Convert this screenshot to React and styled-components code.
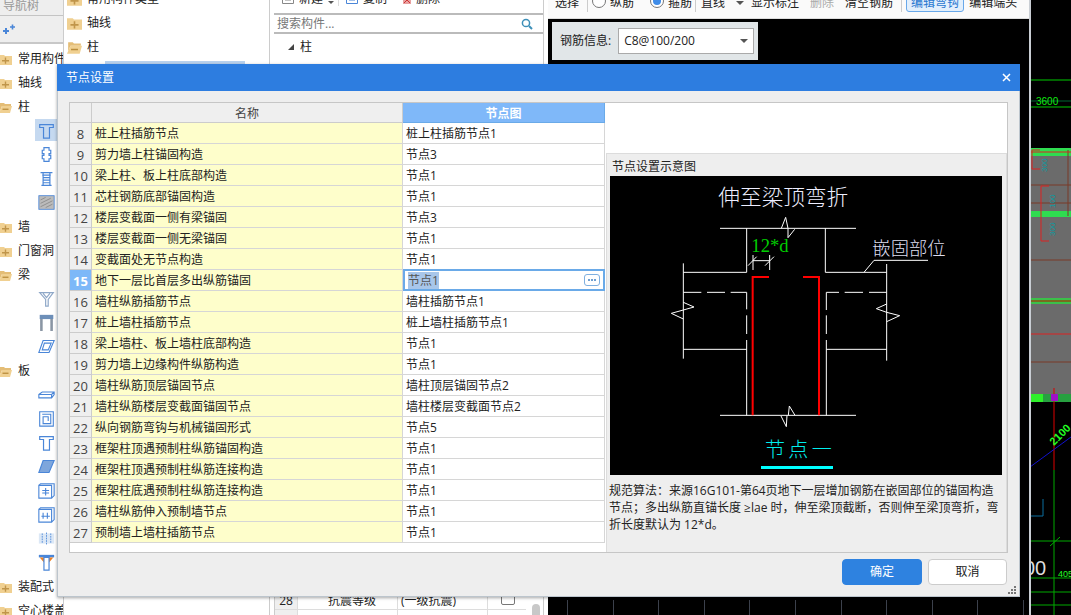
import styled, { createGlobalStyle } from 'styled-components';

const GlobalStyle = createGlobalStyle`
  html, body {
    margin: 0;
    padding: 0;
    overflow: hidden;
    background: #fff;
  }
  * {
    box-sizing: border-box;
  }
`;

const Page = styled.div`
  position: relative;
  width: 1071px;
  height: 615px;
  display: flex;
  overflow: hidden;
  background: #fff;
  color: #222;
  font: 12px/24px "Open Sans", "Noto Sans CJK SC", sans-serif;
`;

/* left navigation */
const NavColumn = styled.div`
  width: 64px;
  flex: none;
  overflow: hidden;
  white-space: nowrap;
  border-right: 1px solid #ccc;
`;

const NavTitle = styled.div`
  height: 16px;
  background: #eee;
  border-bottom: 1px solid #c4c4c4;
  color: #999;
  padding-left: 3px;
  line-height: 12px;
`;

const NavTools = styled.div`
  height: 28px;
  background: #eee;
  border-bottom: 2px solid #c8c8c8;
  padding: 8px 0 0 2px;
  margin-bottom: 3px;
  display: flex;
`;

const NavRow = styled.div`
  height: 24px;
  display: flex;
  align-items: center;
  gap: 6px;
`;

const FolderBox = styled.svg`
  width: ${(p) => p.$size}px;
  height: ${(p) => p.$size}px;
  margin-left: ${(p) => (p.$size > 13 ? 0 : -1)}px;
  flex: none;
`;

const IconRow = styled.div`
  height: 24px;
  padding: 0 0 2px 35px;
`;

const IconCell = styled.div`
  width: 22px;
  height: 22px;
  display: flex;
  align-items: center;
  justify-content: center;
  background: ${(p) => (p.$active ? '#c5d9f0' : 'transparent')};
`;

/* tree next to navigation */
const TreeColumn = styled.div`
  width: 206px;
  flex: none;
  overflow: hidden;
  border-right: 1px solid #ccc;
`;

const TreeInner = styled.div`
  margin-top: -13px;
`;

const TreeRow = styled.div`
  height: 24px;
  display: flex;
  align-items: center;
  gap: 5px;
  padding-left: 3px;
`;

const TreeSelected = styled.div`
  height: 20px;
  margin: 2px 24px 0 41px;
  background: #b9d2ee;
`;

/* component list */
const ListColumn = styled.div`
  position: relative;
  width: 270px;
  flex: none;
  margin-left: 4px;
  display: flex;
  flex-direction: column;
  border-right: 1px solid #ccc;
  overflow: hidden;
`;

const ListTools = styled.div`
  height: 15px;
  flex: none;
  border-bottom: 2px solid #bbb;
  overflow: hidden;
  display: flex;
  align-items: flex-end;
  padding: 0 0 7px 8px;
  line-height: 14px;
`;

const ToolText = styled.span`
  display: flex;
  align-items: center;
  gap: 5px;
  margin-right: ${(p) => p.$gap || 0}px;
`;

const ToolCaret = styled.span`
  width: 0;
  height: 0;
  margin: 0 4px 2px 5px;
  border: 3px solid transparent;
  border-top: 3px solid #555;
  border-bottom: none;
`;

const ToolDivider = styled.span`
  width: 1px;
  height: 12px;
  margin-right: 7px;
  background: #ddd;
`;

const SearchBox = styled.div`
  height: 19px;
  flex: none;
  border-bottom: 2px solid #bbb;
  padding: 0 10px 0 3px;
  display: flex;
  justify-content: space-between;
  align-items: center;
  color: #777;
  line-height: 17px;
`;

const ListTree = styled.div`
  height: 24px;
  margin-top: 1px;
  display: flex;
  align-items: center;
  gap: 6px;
  padding-left: 14px;
`;

const Triangle = styled.span`
  width: 0;
  height: 0;
  border-left: 6px solid transparent;
  border-bottom: 6px solid #444;
`;

const AttrTable = styled.div`
  margin-top: auto;
  display: grid;
  grid-template-columns: 23px 100px 90px 40px;
  grid-auto-rows: 22px;
  height: 27px;
  overflow: hidden;
  border-left: 1px solid #ccc;
  margin-right: 17px;
`;

const AttrCell = styled.div`
  border-right: 1px solid #ddd;
  border-bottom: 1px solid #ddd;
  padding: 4px 0 0 ${(p) => p.$pad || 0}px;
  background: ${(p) => (p.$head ? '#efefef' : '#fff')};
  display: flex;
  align-items: center;
  justify-content: ${(p) => (p.$center ? 'center' : 'flex-start')};
`;

const CheckBox = styled.span`
  width: 14px;
  height: 14px;
  border: 1px solid #777;
  border-radius: 2px;
  margin-top: -6px;
`;

const ScrollThumb = styled.div`
  position: absolute;
  right: 3px;
  bottom: -6px;
  width: 8px;
  height: 17px;
  border-radius: 4px;
  background: #c8c8c8;
`;

/* steel editor */
const EditorColumn = styled.div`
  width: 481px;
  flex: none;
  margin-left: 4px;
  display: flex;
  flex-direction: column;
`;

const EditorBar = styled.div`
  height: 19px;
  flex: none;
  background: #fafafa;
  border-bottom: 1px solid #ddd;
  overflow: hidden;
`;

const EditorBarRow = styled.div`
  margin-top: -9px;
  height: 21px;
  display: flex;
  align-items: flex-start;
  padding-left: 7px;
  line-height: 24px;
  white-space: nowrap;
`;

const BarButton = styled.span`
  height: 21px;
  padding: 0 ${(p) => p.$pad ?? 0}px;
  margin-right: ${(p) => p.$gap || 0}px;
  color: ${(p) => (p.$disabled ? '#aaa' : p.$on ? '#2a78d0' : '#222')};
  background: ${(p) => (p.$on ? '#e2effc' : 'transparent')};
  border: ${(p) => (p.$on ? '1px solid #68a8ea' : 'none')};
  border-radius: 3px;
  line-height: ${(p) => (p.$on ? '22px' : '24px')};
`;

const BarDivider = styled.span`
  width: 1px;
  height: 21px;
  background: #ccc;
  margin-right: ${(p) => p.$gap}px;
`;

const Radio = styled.span`
  width: 14px;
  height: 14px;
  margin: 3px 4px 0 0;
  border: 1px solid #777;
  border-radius: 50%;
  background: #fff;
  display: flex;
  align-items: center;
  justify-content: center;
  flex: none;
  &::after {
    content: '';
    width: 8px;
    height: 8px;
    border-radius: 50%;
    background: ${(p) => (p.$on ? '#3f8ce8' : 'transparent')};
  }
`;

const Caret = styled.span`
  width: 0;
  height: 0;
  border: 4px solid transparent;
  border-top: 4px solid #555;
  border-bottom: none;
  margin: 10px 7px 0 ${(p) => p.$left}px;
`;

const Canvas = styled.div`
  flex: 1;
  background: #000;
  display: flex;
  flex-direction: column;
  padding: 3px 0 0 4px;
`;

const SteelPanel = styled.div`
  width: 206px;
  height: 38px;
  background: #e1e6e8;
  display: flex;
  align-items: center;
  padding-left: 8px;
  gap: 7px;
`;

const SteelSelect = styled.div`
  width: 136px;
  height: 26px;
  background: #fff;
  border: 1px solid #aaa;
  display: flex;
  align-items: center;
  justify-content: space-between;
  padding: 0 5px;
  &::after {
    content: '';
    border: 4px solid transparent;
    border-top: 4px solid #555;
    border-bottom: none;
  }
`;

const RulerTicks = styled.div`
  margin: auto 0 0 15px;
  height: 15px;
  background: repeating-linear-gradient(90deg, #3c414c 0 1px, transparent 1px 45.6px);
`;

const CadStrip = styled.svg`
  width: 42px;
  height: 615px;
  flex: none;
  display: block;
  background: #000;
  border-left: 2px solid #c9ced4;
`;

/* dialog on top */
const Dialog = styled.div`
  position: absolute;
  left: 57px;
  top: 64px;
  width: 963px;
  height: 533px;
  display: flex;
  flex-direction: column;
  box-shadow: 0 1px 3px rgba(0, 0, 0, 0.35);
`;

const DialogTitle = styled.div`
  height: 27px;
  flex: none;
  background: #2d7de0;
  color: #fff;
  display: flex;
  align-items: center;
  justify-content: space-between;
  padding: 0 9px;
`;

const DialogBody = styled.div`
  flex: 1;
  background: #eee;
  border: 1px solid #bcc5cd;
  border-top: none;
  padding: 11px 12px 0 11px;
  display: flex;
  flex-direction: column;
`;

const ContentPanel = styled.div`
  width: 939px;
  height: 451px;
  background: #fff;
  border: 1px solid #c6c6c6;
  display: flex;
`;

const NodeGrid = styled.div`
  width: 535px;
  flex: none;
  display: grid;
  grid-template-columns: 22px 311px 202px;
  grid-template-rows: 20px;
  grid-auto-rows: 21px;
  align-content: start;
  line-height: 22px;
`;

const HeadCell = styled.div`
  background: ${(p) => (p.$on ? '#7fb8f9' : '#efefef')};
  color: ${(p) => (p.$on ? '#fff' : '#444')};
  font-weight: ${(p) => (p.$on ? 700 : 400)};
  border-right: 1px solid ${(p) => (p.$on ? '#6aaae8' : '#ccc')};
  border-bottom: 1px solid ${(p) => (p.$on ? '#6aaae8' : '#ccc')};
  text-align: center;
`;

const NumCell = styled.div`
  background: ${(p) => (p.$on ? '#7db8f8' : '#efefef')};
  color: ${(p) => (p.$on ? '#fff' : '#444')};
  font-weight: ${(p) => (p.$on ? 700 : 400)};
  font-size: 13px;
  border-right: 1px solid #ccc;
  border-bottom: 1px solid #ccc;
  text-align: center;
`;

const NameCell = styled.div`
  background: #fefecb;
  border-right: 1px solid #d6d6d6;
  border-bottom: 1px solid #d6d6d6;
  padding-left: 3px;
  white-space: nowrap;
`;

const ValueCell = styled.div`
  border-right: 1px solid #d6d6d6;
  border-bottom: 1px solid #d6d6d6;
  padding-left: 3px;
  white-space: nowrap;
`;

const EditingCell = styled.div`
  border: 2px solid #6aaae8;
  margin: -1px 0 0 0;
  height: 22px;
  display: flex;
  align-items: center;
  justify-content: space-between;
  padding: 0 3px;
  background: #fff;
`;

const SelectedText = styled.span`
  background: #a8c6ea;
  color: #555;
  line-height: 17px;
`;

const MoreButton = styled.span`
  width: 16px;
  height: 12px;
  border: 1px solid #7fb0e0;
  border-radius: 3px;
  display: flex;
  align-items: center;
  justify-content: center;
  gap: 1px;
  i {
    width: 2px;
    height: 2px;
    background: #6f9fd0;
  }
`;

const SideColumn = styled.div`
  flex: 1;
  margin-left: 1px;
  padding-top: 50px;
  display: flex;
  flex-direction: column;
`;

const PreviewBox = styled.div`
  flex: 1;
  background: #eee;
  border: 1px solid #dcdcdc;
  border-bottom: none;
`;

const PreviewTitle = styled.div`
  height: 22px;
  padding: 2px 0 0 5px;
  line-height: 22px;
`;

const Drawing = styled.svg`
  display: block;
  width: 392px;
  height: 299px;
  margin-left: 3px;
  background: #000;
`;

const PreviewNote = styled.p`
  margin: 7px 0 0 2px;
  width: 394px;
  line-height: 17px;
  color: #222;
`;

const DialogFooter = styled.div`
  display: flex;
  justify-content: flex-end;
  gap: 6px;
  padding-top: 6px;
`;

const FooterButton = styled.button`
  width: ${(p) => (p.$primary ? 80 : 79)}px;
  height: 26px;
  border-radius: 4px;
  border: 1px solid ${(p) => (p.$primary ? '#2e82e0' : '#ccc')};
  background: ${(p) => (p.$primary ? '#2e82e0' : '#fff')};
  color: ${(p) => (p.$primary ? '#fff' : '#222')};
  font: inherit;
  padding: 0;
`;

const Grip = styled.svg`
  position: absolute;
  right: 3px;
  bottom: 2px;
  width: 9px;
  height: 9px;
`;

const Folder = ({ open, size = 13 }) => (
  <FolderBox $size={size} viewBox="0 0 13 13">
    {open ? (
      <>
        <path d="M1 2h4l1 1h6v2H3L1 10z" fill="#e4bd76" />
        <path d="M3 5h10l-2 7H0z" fill="#f0d091" />
        <path d="M3.5 7.6h6v1.3h-6z" fill="#b98d3c" />
      </>
    ) : (
      <>
        <path d="M0 2h5l1 1h7v9H0z" fill="#f0d091" />
        <path d="M3 7h7v1.4H3zM5.8 4.6h1.4v6.2H5.8z" fill="#c0954a" />
      </>
    )}
  </FolderBox>
);

const blue = '#4a86d8';

const shapes = {
  tee: <path d="M2 3h16v3.5h-4.5V19h-7V6.5H2z" fill="none" stroke={blue} strokeWidth="1.4" />,
  cross: <path d="M7 2h6v3h2v4h-2v2h2v4h-2v3H7v-3H5v-4h2V9H5V5h2z" fill="none" stroke={blue} strokeWidth="1.4" />,
  ribbed: <path d="M3 3h14M5 6h10M6 3v15h8V3M6 9h8M6 12h8M6 15h8M4 18h12" fill="none" stroke={blue} strokeWidth="1.4" />,
  hatch: <g><rect x="1" y="2" width="18" height="16" fill="#bbb" stroke={blue} /><path d="M3 7l6-3M3 11l12-6M3 15l14-7M9 16l8-4" stroke="#888" /></g>,
  funnel: <path d="M2 3h16l-6 8v8H9v-8zM6 4l4 5 4-5" fill="none" stroke="#8fa8c8" strokeWidth="1.4" />,
  gate: <g><rect x="2" y="1" width="16" height="5" fill="#6d8fb8" /><path d="M4 6v14M16 6v14" stroke="#8a96a4" strokeWidth="3" fill="none" /></g>,
  para: <path d="M6 3h13l-6 14H1zM7.5 6h8l-3.5 8H5z" fill="none" stroke={blue} strokeWidth="1.3" />,
  plate: <path d="M1 10l4-3h14v3l-3 4H1zM1 10h15v4M16 10l3-3" fill="none" stroke={blue} strokeWidth="1.3" />,
  spiral: <path d="M2 2h16v17H2zM5 5h10v11H6v-8h6v5" fill="none" stroke={blue} strokeWidth="1.3" />,
  paraFill: <path d="M6 3h13l-6 14H1z" fill="#7ea6dc" stroke={blue} strokeWidth="1.3" />,
  boxCross: <g fill="none" stroke={blue} strokeWidth="1.3"><path d="M1 4h15v15H1zM1 4l2-2h16v14l-3 3" /><path d="M9 7v9M5 10h8M5 13h8" /></g>,
  boxGrid: <g fill="none" stroke={blue} strokeWidth="1.3"><path d="M1 4h15v15H1zM1 4l2-2h16v14l-3 3" /><path d="M6 8v7M11 8v7M4 12h10" /></g>,
  pair: <g><rect x="1" y="4" width="18" height="12" fill="#dce8f6" /><path d="M10 3v14M5 4v12M15 4v12" stroke={blue} strokeDasharray="2 1" /></g>,
  teeCap: <g><path d="M1 1h18v3H1z" fill={blue} /><path d="M2 4h5v6zM18 4h-5v6z" fill="#f08020" /><path d="M7 4h6v15H7z" fill="none" stroke={blue} strokeWidth="1.4" /></g>,
};

const NavIcon = ({ name, active }) => (
  <IconRow>
    <IconCell $active={active}>
      <svg width="17" height="17" viewBox="0 0 20 20">{shapes[name]}</svg>
    </IconCell>
  </IconRow>
);

const navItems = [
  ['f', '常用构件类型'],
  ['f', '轴线'],
  ['o', '柱'],
  ['i', 'tee', true],
  ['i', 'cross'],
  ['i', 'ribbed'],
  ['i', 'hatch'],
  ['f', '墙'],
  ['f', '门窗洞'],
  ['o', '梁'],
  ['i', 'funnel'],
  ['i', 'gate'],
  ['i', 'para'],
  ['o', '板'],
  ['i', 'plate'],
  ['i', 'spiral'],
  ['i', 'tee'],
  ['i', 'paraFill'],
  ['i', 'boxCross'],
  ['i', 'boxGrid'],
  ['i', 'pair'],
  ['i', 'teeCap'],
  ['f', '装配式'],
  ['f', '空心楼盖'],
];

const nodeRows = [
  [8, '桩上柱插筋节点', '桩上柱插筋节点1'],
  [9, '剪力墙上柱锚固构造', '节点3'],
  [10, '梁上柱、板上柱底部构造', '节点1'],
  [11, '芯柱钢筋底部锚固构造', '节点1'],
  [12, '楼层变截面一侧有梁锚固', '节点3'],
  [13, '楼层变截面一侧无梁锚固', '节点1'],
  [14, '变截面处无节点构造', '节点1'],
  [15, '地下一层比首层多出纵筋锚固', '节点1'],
  [16, '墙柱纵筋插筋节点', '墙柱插筋节点1'],
  [17, '桩上墙柱插筋节点', '桩上墙柱插筋节点1'],
  [18, '梁上墙柱、板上墙柱底部构造', '节点1'],
  [19, '剪力墙上边缘构件纵筋构造', '节点1'],
  [20, '墙柱纵筋顶层锚固节点', '墙柱顶层锚固节点2'],
  [21, '墙柱纵筋楼层变截面锚固节点', '墙柱楼层变截面节点2'],
  [22, '纵向钢筋弯钩与机械锚固形式', '节点5'],
  [23, '框架柱顶遇预制柱纵筋锚固构造', '节点1'],
  [24, '框架柱顶遇预制柱纵筋连接构造', '节点1'],
  [25, '框架柱底遇预制柱纵筋连接构造', '节点1'],
  [26, '墙柱纵筋伸入预制墙节点', '节点1'],
  [27, '预制墙上墙柱插筋节点', '节点1'],
];

const whiteLines = [
  'M348 175H756', 'M428 175V307', 'M664 175V307', 'M238 307H428', 'M664 307H848',
  'M238 280V566', 'M848 282V572', 'M238 367H292', 'M309 367H363', 'M380 367H428',
  'M667 367H705', 'M722 367H777', 'M795 367H848', 'M428 367V418', 'M428 436V492',
  'M428 510V736', 'M667 367V420', 'M667 436V492', 'M667 510V736', 'M238 538H428',
  'M667 538H848', 'M348 736H756', 'M447 255V300', 'M497 255V300', 'M447 272H497',
  'M432 287L458 260', 'M483 287L510 260', 'M780 307L810 271H972',
  'M532 175L545 142L552 175V203L572 178', 'M553 736L556 708L573 736', 'M531 738L547 770L549 736',
  'M238 397L270 411L238 420L202 430L238 447', 'M848 402L817 416L848 427L887 437L848 455',
];

const NodeDrawing = () => (
  <Drawing viewBox="18 18 1176 897">
    <g fill="none" stroke="#fff" strokeWidth="3">
      {whiteLines.map((d) => <path key={d} d={d} />)}
    </g>
    <path d="M446 736V321H495M645 736V321H597" fill="none" stroke="#f00" strokeWidth="6" />
    <g fontFamily='"Noto Sans CJK SC", sans-serif' fontWeight="300">
      <text x="343" y="104" fontSize="65" fill="#eef">伸至梁顶弯折</text>
      <text x="805" y="256" fontSize="55" fill="#dde">嵌固部位</text>
      <text x="483" y="862" fontSize="60" letterSpacing="10" fill="#0ee">节点一</text>
    </g>
    <text x="442" y="246" fontSize="56" fontFamily='"Liberation Serif", serif' fill="#0c0">12*d</text>
    <rect x="471" y="888" width="216" height="9" fill="#0ff" />
  </Drawing>
);

const CadDrawing = () => (
  <CadStrip viewBox="1031 0 40 615">
    <path d="M1030 80H1071M1030 107H1071" stroke="#0c0" />
    <path d="M1030 101H1071" stroke="#063" />
    <text x="1036" y="105" fontSize="10" fill="#1e1" fontFamily='"Liberation Sans", sans-serif'>3600</text>
    <rect x="1030" y="148" width="41" height="254" fill="#6b6b6b" />
    <rect x="1030" y="148" width="41" height="8" fill="#2fdc50" />
    <rect x="1030" y="211" width="41" height="6" fill="#2fdc50" />
    <rect x="1030" y="298" width="41" height="6" fill="#3cc04a" />
    <rect x="1030" y="300" width="41" height="2" fill="#7a6a20" />
    <rect x="1030" y="394" width="41" height="8" fill="#27a040" />
    <rect x="1030" y="394" width="13" height="8" fill="#2ef02a" />
    <path d="M1030 185H1071M1030 203H1071M1030 260H1071M1030 362H1071M1068 150V216" stroke="#7a3a28" />
    <path d="M1030 334H1071M1030 152H1071" stroke="#d22" />
    <path d="M1040 150H1032V169H1040M1049 186H1041V241H1049" fill="none" stroke="#d22" />
    <g fontSize="8" fill="#0a9aa0" fontFamily='"Liberation Sans", sans-serif'>
      <text transform="translate(1047 172) rotate(-90)">300</text>
      <text transform="translate(1055 208) rotate(-90)">100</text>
      <text transform="translate(1055 236) rotate(-90)">300</text>
    </g>
    <path d="M1054 388V470" stroke="#d00" />
    <path d="M1054 470V615" stroke="#0a0" />
    <rect x="1051" y="394" width="7" height="7" fill="#a010c8" />
    <path d="M1030 467L1071 437" stroke="#11c" />
    <text transform="translate(1054 446) rotate(-45)" fontSize="11" fontWeight="700" fill="#2f2" fontFamily='"Liberation Sans", sans-serif'>2100</text>
    <path d="M1043 499V516H1030" fill="none" stroke="#0a6f9f" />
    <path d="M1030 541H1071M1030 578H1071M1030 592H1071M1030 605H1071M1050 546L1060 537" stroke="#0a0" />
    <text x="1024" y="575" fontSize="20" fill="#ddd" fontFamily='"Liberation Sans", sans-serif'>00</text>
    <text x="1058" y="577" fontSize="9" fill="#2f2" fontFamily='"Liberation Sans", sans-serif'>4050</text>
  </CadStrip>
);

const Row = ({ num, name, value }) => {
  const editing = num === 15;
  return (
    <>
      <NumCell $on={editing}>{num}</NumCell>
      <NameCell>{name}</NameCell>
      {editing ? (
        <EditingCell>
          <SelectedText>{value}</SelectedText>
          <MoreButton><i /><i /><i /></MoreButton>
        </EditingCell>
      ) : (
        <ValueCell>{value}</ValueCell>
      )}
    </>
  );
};

const App = () => (
  <>
    <GlobalStyle />
    <Page>
      <NavColumn>
        <NavTitle>导航树</NavTitle>
        <NavTools>
          <svg width="14" height="12" viewBox="0 0 14 12">
            <path d="M1 7h6M4 4v6" stroke={blue} strokeWidth="2" />
            <path d="M8 3h5M10.5 .5v5" stroke={blue} strokeWidth="1.6" />
          </svg>
        </NavTools>
        {navItems.map((item, i) =>
          item[0] === 'i' ? (
            <NavIcon key={i} name={item[1]} active={item[2]} />
          ) : (
            <NavRow key={i}>
              <Folder open={item[0] === 'o'} />
              <span>{item[1]}</span>
            </NavRow>
          )
        )}
      </NavColumn>

      <TreeColumn>
        <TreeInner>
          <TreeRow><Folder size={15} /><span>常用构件类型</span></TreeRow>
          <TreeRow><Folder size={15} /><span>轴线</span></TreeRow>
          <TreeRow><Folder size={15} open /><span>柱</span></TreeRow>
          <TreeSelected />
        </TreeInner>
      </TreeColumn>

      <ListColumn>
        <ListTools>
          <ToolText>
            <svg width="12" height="10" viewBox="0 0 12 10"><path d="M.5 0v9.5h11V0M3 3h6M3 6h6" fill="none" stroke="#888" /></svg>
            新建
          </ToolText>
          <ToolCaret />
          <ToolDivider />
          <ToolText $gap={16}>
            <svg width="12" height="10" viewBox="0 0 12 10"><path d="M.5 0v9.5h11V0M3 3h6M3 6h6" fill="none" stroke="#4a86d8" /></svg>
            复制
          </ToolText>
          <ToolText>
            <svg width="8" height="10" viewBox="0 0 8 10"><path d="M0 2h8v8H0z" fill="#e8a0a0" /><path d="M1 3l6 6M7 3l-6 6" stroke="#c33" /></svg>
            删除
          </ToolText>
        </ListTools>
        <SearchBox>
          <span>搜索构件...</span>
          <svg width="12" height="12" viewBox="0 0 12 12">
            <circle cx="5" cy="5" r="3.6" fill="none" stroke="#3d8fb8" strokeWidth="1.5" />
            <path d="M8 8l3 3" stroke="#3d8fb8" strokeWidth="2" />
          </svg>
        </SearchBox>
        <ListTree><Triangle /><span>柱</span></ListTree>
        <AttrTable>
          <AttrCell $head $center>28</AttrCell>
          <AttrCell $pad={30}>抗震等级</AttrCell>
          <AttrCell $pad={3}>(一级抗震)</AttrCell>
          <AttrCell $center><CheckBox /></AttrCell>
          <AttrCell $head />
          <AttrCell />
          <AttrCell />
          <AttrCell />
        </AttrTable>
        <ScrollThumb />
      </ListColumn>

      <EditorColumn>
        <EditorBar>
          <EditorBarRow>
            <BarButton $gap={8}>选择</BarButton>
            <BarDivider $gap={4} />
            <Radio />
            <BarButton $gap={16}>纵筋</BarButton>
            <Radio $on />
            <BarButton $gap={3}>箍筋</BarButton>
            <BarDivider $gap={5} />
            <BarButton>直线</BarButton>
            <Caret $left={11} />
            <BarButton $gap={11}>显示标注</BarButton>
            <BarButton $gap={11} $disabled>删除</BarButton>
            <BarButton $gap={8}>清空钢筋</BarButton>
            <BarDivider $gap={4} />
            <BarButton $gap={5} $on $pad={4}>编辑弯钩</BarButton>
            <BarButton>编辑端头</BarButton>
          </EditorBarRow>
        </EditorBar>
        <Canvas>
          <SteelPanel>
            <span>钢筋信息:</span>
            <SteelSelect>C8@100/200</SteelSelect>
          </SteelPanel>
          <RulerTicks />
        </Canvas>
      </EditorColumn>

      <CadDrawing />

      <Dialog>
        <DialogTitle>
          <span>节点设置</span>
          <svg width="9" height="9" viewBox="0 0 9 9">
            <path d="M1 1l7 7M8 1l-7 7" stroke="#fff" strokeWidth="1.5" />
          </svg>
        </DialogTitle>
        <DialogBody>
          <ContentPanel>
            <NodeGrid>
              <HeadCell />
              <HeadCell>名称</HeadCell>
              <HeadCell $on>节点图</HeadCell>
              {nodeRows.map(([num, name, value]) => (
                <Row key={num} num={num} name={name} value={value} />
              ))}
            </NodeGrid>
            <SideColumn>
              <PreviewBox>
                <PreviewTitle>节点设置示意图</PreviewTitle>
                <NodeDrawing />
                <PreviewNote>
                  规范算法：来源16G101-第64页地下一层增加钢筋在嵌固部位的锚固构造节点；多出纵筋直锚长度 ≥lae 时，伸至梁顶截断，否则伸至梁顶弯折，弯折长度默认为 12*d。
                </PreviewNote>
              </PreviewBox>
            </SideColumn>
          </ContentPanel>
          <DialogFooter>
            <FooterButton $primary>确定</FooterButton>
            <FooterButton>取消</FooterButton>
          </DialogFooter>
        </DialogBody>
        <Grip viewBox="0 0 9 9">
          <path d="M6 0h2v2H6zM3 3h2v2H3zM6 3h2v2H6zM0 6h2v2H0zM3 6h2v2H3zM6 6h2v2H6z" fill="#777" />
        </Grip>
      </Dialog>
    </Page>
  </>
);

export default App;
